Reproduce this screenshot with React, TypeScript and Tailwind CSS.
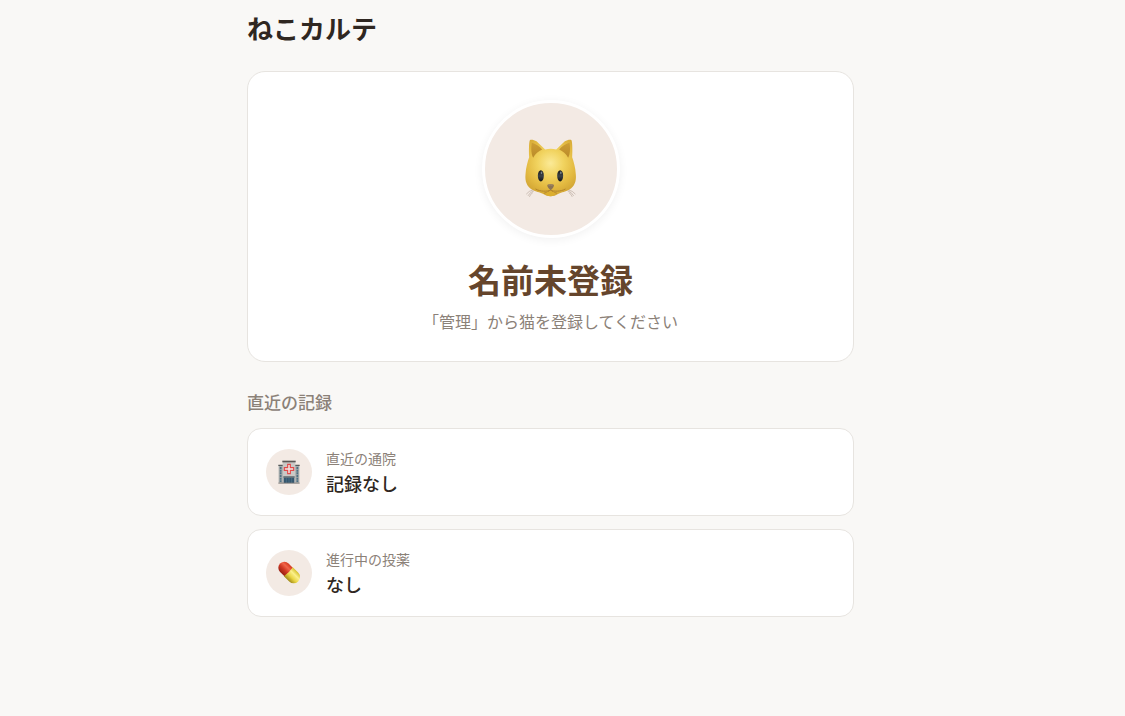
import type { ReactNode } from "react";

interface RecordRow {
	label: string;
	value: string;
	icon: ReactNode;
}

function CatFace() {
	return (
		<svg width="70" height="75" viewBox="2.5 4.5 210 225" fill="none" aria-hidden="true">
			<defs>
				<radialGradient id="fur" cx="106" cy="98" r="112" gradientUnits="userSpaceOnUse">
					<stop offset="0" stopColor="#fbea97" />
					<stop offset="0.35" stopColor="#f1d35f" />
					<stop offset="0.65" stopColor="#e3ba41" />
					<stop offset="1" stopColor="#c99a2c" />
				</radialGradient>
				<linearGradient id="ear" x1="0" y1="30" x2="0" y2="84" gradientUnits="userSpaceOnUse">
					<stop offset="0" stopColor="#d0a035" />
					<stop offset="1" stopColor="#b98a29" />
				</linearGradient>
				<linearGradient id="eye" x1="0" y1="120" x2="0" y2="153" gradientUnits="userSpaceOnUse">
					<stop offset="0" stopColor="#17191b" />
					<stop offset="0.5" stopColor="#3b4247" />
					<stop offset="1" stopColor="#101113" />
				</linearGradient>
			</defs>
			{/* Whiskers */}
			<g stroke="#a28f80" strokeWidth="1.4" strokeLinecap="round">
				<path d="M54 178q-13 3-20 12M56 181q-12 4-17 14M52 187q-7 4-9 11" />
				<path d="M160 178q13 3 20 12M158 181q12 4 17 14M162 187q7 4 9 11" />
			</g>
			{/* Head and ears */}
			<path
				d="M44 29C47 26 57 28 64 32L90 57C101 54 113 54 123 57L149 32C156 28 166 26 169 29C172 38 172 62 171 80C175 92 181 110 182 132C184 152 178 168 163 177C150 185 140 184 130 190C115 200 98 200 83 190C73 184 63 185 50 177C35 168 29 152 31 132C32 110 38 92 42 80C41 62 41 38 44 29Z"
				fill="url(#fur)"
			/>
			<path d="M50 37C60 40 74 48 81 57C70 62 60 70 54 82C48 72 47 52 50 37Z" fill="url(#ear)" />
			<path d="M163 37C153 40 139 48 132 57C143 62 153 70 159 82C165 72 166 52 163 37Z" fill="url(#ear)" />
			{/* Eyes */}
			<ellipse cx="77" cy="136" rx="9" ry="17" fill="url(#eye)" />
			<ellipse cx="135" cy="136" rx="9" ry="17" fill="url(#eye)" />
			<ellipse cx="79" cy="127" rx="2.5" ry="4" fill="#7b858c" />
			<ellipse cx="137" cy="127" rx="2.5" ry="4" fill="#7b858c" />
			{/* Muzzle */}
			<path
				d="M62 176c14 8 34 7 44 3 10 4 30 5 44-3M88 188c7-2 13-5 18-10 5 5 11 8 18 10"
				stroke="#b5862a"
				strokeWidth="3"
				strokeLinecap="round"
			/>
			<path d="M90 188q16-10 32 0-7 9-16 9t-16-9z" fill="#dcae2e" />
			<path d="M97 163c5-3 14-3 19 0 2 5-4 12-9.5 16-5.5-4-12-11-9.5-16z" fill="#8d7453" />
			<path d="M100 164q6-2 12 0" stroke="#b49b78" strokeWidth="2" />
		</svg>
	);
}

function HospitalIcon() {
	return (
		<svg width="24" height="24" viewBox="0 0 72 72" fill="none" aria-hidden="true">
			{/* Side wings */}
			<path d="M5 16h14v53H5zM53 16h14v53H53z" fill="#a4a9a9" />
			<path d="M4 14h14v4H4zM54 14h14v4H54z" fill="#565a5a" />
			<path d="M11 21v45M61 21v45" stroke="#4d7185" strokeWidth="5" strokeDasharray="6 2" />
			{/* Main block */}
			<path d="M17 4h38v65H17z" fill="#cac8c6" />
			<path d="M16 2h40v5H16z" fill="#5b5856" />
			<path
				d="M32 13h8v10h10v8H40v10h-8V31H22v-8h10z"
				fill="#f0e7e4"
				stroke="#e34b4b"
				strokeWidth="3.5"
			/>
			<path d="M19 49h34v4H19z" fill="#505a60" />
			<path d="M20 53h32v16H20z" fill="#35566d" />
			<path d="M28 54v15M36 54v15M44 54v15" stroke="#5b8098" strokeWidth="1.5" />
			<path d="M4 68h64v3H4z" fill="#85817e" />
		</svg>
	);
}

function PillIcon() {
	return (
		<svg width="24" height="24" viewBox="-2 0 76 76" fill="none" aria-hidden="true">
			<defs>
				<linearGradient id="pillRed" x1="0" y1="18" x2="0" y2="54" gradientUnits="userSpaceOnUse">
					<stop offset="0" stopColor="#d53a20" />
					<stop offset="0.3" stopColor="#f0654a" />
					<stop offset="0.6" stopColor="#d23a25" />
					<stop offset="1" stopColor="#9b2014" />
				</linearGradient>
				<linearGradient id="pillYellow" x1="0" y1="17" x2="0" y2="55" gradientUnits="userSpaceOnUse">
					<stop offset="0" stopColor="#d9c535" />
					<stop offset="0.3" stopColor="#fbf08b" />
					<stop offset="0.65" stopColor="#e9d544" />
					<stop offset="1" stopColor="#a68f1c" />
				</linearGradient>
			</defs>
			<g transform="rotate(45 36 36)">
				<path d="M36 17v38H15a19 19 0 010-38z" fill="url(#pillRed)" />
				<path d="M33 16h24a20 20 0 010 40H33q5-20 0-40z" fill="url(#pillYellow)" />
			</g>
		</svg>
	);
}

const RECORDS: RecordRow[] = [
	{ label: "直近の通院", value: "記録なし", icon: <HospitalIcon /> },
	{ label: "進行中の投薬", value: "なし", icon: <PillIcon /> },
];

export default function App() {
	return (
		<div className="min-h-screen bg-[#f9f8f6] px-3 pt-3 pb-24 sm:pr-9 font-['Noto_Sans_CJK_JP',sans-serif] text-[#2f2721]">
			<main className="mx-auto w-full max-w-[607px]">
				<h1 className="text-[26px] leading-8 font-bold">ねこカルテ</h1>

				{/* Profile */}
				<section className="mt-[27px] flex flex-col items-center rounded-[18px] border border-[#e7e4e0] bg-white px-5 py-7 text-center">
					<div className="flex size-[138px] items-center justify-center rounded-full border-3 border-white bg-[#f3eae4] shadow-[0_2px_10px_rgba(0,0,0,0.06)]">
						<CatFace />
					</div>
					<h2 className="mt-[23px] text-[33px] leading-9 font-bold text-[#65452c]">名前未登録</h2>
					<p className="mt-3 text-base text-[#8b8178]">「管理」から猫を登録してください</p>
				</section>

				{/* Recent records */}
				<h3 className="mt-7 text-[17px] leading-6 font-medium text-[#8b8178]">直近の記録</h3>
				<ul className="mt-3.5 flex flex-col gap-[13px]">
					{RECORDS.map((record) => (
						<li
							key={record.label}
							className="flex items-center gap-3.5 rounded-[14px] border border-[#e7e4e0] bg-white px-[18px] py-[19px]"
						>
							<div className="flex size-[46px] shrink-0 items-center justify-center rounded-full bg-[#f3eae4]">
								{record.icon}
							</div>
							<div className="min-w-0">
								<p className="text-sm leading-5 text-[#8b8178]">{record.label}</p>
								<p className="mt-0.5 text-lg leading-[26px] font-medium">{record.value}</p>
							</div>
						</li>
					))}
				</ul>
			</main>
		</div>
	);
}
